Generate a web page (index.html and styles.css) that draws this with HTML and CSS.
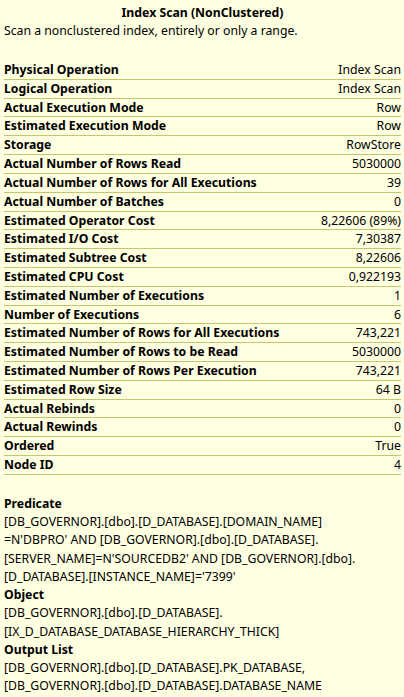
FILE: index.html
```html
<!DOCTYPE html>
<html>
<head>
<meta charset="utf-8">
<link rel="stylesheet" href="styles.css">
</head>
<body>
<div class="tip">
  <div class="title">Index Scan (NonClustered)</div>
  <div class="desc">Scan a nonclustered index, entirely or only a range.</div>
  <div class="props">
    <div class="row"><span class="k">Physical Operation</span><span class="v">Index Scan</span></div>
    <div class="row"><span class="k">Logical Operation</span><span class="v">Index Scan</span></div>
    <div class="row"><span class="k">Actual Execution Mode</span><span class="v">Row</span></div>
    <div class="row"><span class="k">Estimated Execution Mode</span><span class="v">Row</span></div>
    <div class="row"><span class="k">Storage</span><span class="v">RowStore</span></div>
    <div class="row"><span class="k">Actual Number of Rows Read</span><span class="v">5030000</span></div>
    <div class="row"><span class="k">Actual Number of Rows for All Executions</span><span class="v">39</span></div>
    <div class="row"><span class="k">Actual Number of Batches</span><span class="v">0</span></div>
    <div class="row"><span class="k">Estimated Operator Cost</span><span class="v">8,22606 (89%)</span></div>
    <div class="row"><span class="k">Estimated I/O Cost</span><span class="v">7,30387</span></div>
    <div class="row"><span class="k">Estimated Subtree Cost</span><span class="v">8,22606</span></div>
    <div class="row"><span class="k">Estimated CPU Cost</span><span class="v">0,922193</span></div>
    <div class="row"><span class="k">Estimated Number of Executions</span><span class="v">1</span></div>
    <div class="row"><span class="k">Number of Executions</span><span class="v">6</span></div>
    <div class="row"><span class="k">Estimated Number of Rows for All Executions</span><span class="v">743,221</span></div>
    <div class="row"><span class="k">Estimated Number of Rows to be Read</span><span class="v">5030000</span></div>
    <div class="row"><span class="k">Estimated Number of Rows Per Execution</span><span class="v">743,221</span></div>
    <div class="row"><span class="k">Estimated Row Size</span><span class="v">64 B</span></div>
    <div class="row"><span class="k">Actual Rebinds</span><span class="v">0</span></div>
    <div class="row"><span class="k">Actual Rewinds</span><span class="v">0</span></div>
    <div class="row"><span class="k">Ordered</span><span class="v">True</span></div>
    <div class="row"><span class="k">Node ID</span><span class="v">4</span></div>
  </div>
  <div class="sections">
    <div class="sec">
      <div class="sh">Predicate</div>
      <div class="sb">[DB_GOVERNOR].[dbo].[D_DATABASE].[DOMAIN_NAME]<br>=N'DBPRO' AND [DB_GOVERNOR].[dbo].[D_DATABASE].<br>[SERVER_NAME]=N'SOURCEDB2' AND [DB_GOVERNOR].[dbo].<br>[D_DATABASE].[INSTANCE_NAME]='7399'</div>
    </div>
    <div class="sec">
      <div class="sh">Object</div>
      <div class="sb">[DB_GOVERNOR].[dbo].[D_DATABASE].<br>[IX_D_DATABASE_DATABASE_HIERARCHY_THICK]</div>
    </div>
    <div class="sec">
      <div class="sh">Output List</div>
      <div class="sb">[DB_GOVERNOR].[dbo].[D_DATABASE].PK_DATABASE,<br>[DB_GOVERNOR].[dbo].[D_DATABASE].DATABASE_NAME</div>
    </div>
  </div>
</div>
</body>
</html>
```
FILE: styles.css
```css
html, body {
  margin: 0;
  padding: 0;
  background: #ffffe1;
}
body {
  font-family: "Noto Sans", "Open Sans", sans-serif;
  font-size: 12.25px;
  color: #000;
}
.tip {
  width: 404px;
  height: 697px;
  overflow: hidden;
  padding: 4px 3px 0 4px;
  box-sizing: border-box;
}
.title {
  text-align: center;
  font-weight: bold;
  line-height: 18px;
  height: 18px;
}
.desc {
  line-height: 18px;
  height: 18px;
}
.props {
  margin-top: 21px;
}
.row {
  display: flex;
  justify-content: space-between;
  height: 18.82px;
  line-height: 18px;
  border-bottom: 1px solid #c6c66c;
  box-sizing: border-box;
}
.k {
  font-weight: bold;
}
.sections {
  margin-top: 20px;
}
.sh {
  font-weight: bold;
  line-height: 18.25px;
}
.sb {
  line-height: 18.25px;
}
```
